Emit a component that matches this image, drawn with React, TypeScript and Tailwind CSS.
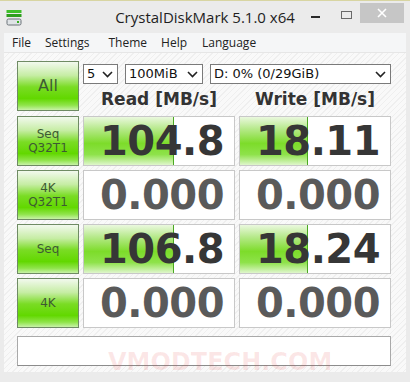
import React from "react";

type Row = {
  label: string[];
  read: string;
  readFill: number;
  write: string;
  writeFill: number;
};

const rows: Row[] = [
  { label: ["Seq", "Q32T1"], read: "104.8", readFill: 90, write: "18.11", writeFill: 68 },
  { label: ["4K", "Q32T1"], read: "0.000", readFill: 0, write: "0.000", writeFill: 0 },
  { label: ["Seq"], read: "106.8", readFill: 90, write: "18.24", writeFill: 68 },
  { label: ["4K"], read: "0.000", readFill: 0, write: "0.000", writeFill: 0 },
];

const Chevron = () => (
  <svg width="11" height="7" viewBox="0 0 11 7" className="shrink-0">
    <path d="M1 1 L5.5 5.5 L10 1" fill="none" stroke="#222" strokeWidth="1.6" />
  </svg>
);

const Select = ({ text, width }: { text: string; width: string }) => (
  <div
    className={`${width} h-[20px] bg-white border border-[#7a7a7a] flex items-center justify-between pl-[3px] pr-[4px] text-[13px] text-[#111] font-['DejaVu_Sans',sans-serif]`}
  >
    <span>{text}</span>
    <Chevron />
  </div>
);

const TestButton = ({ label }: { label: string[] }) => (
  <div className="w-[62px] h-[50px] shrink-0 border border-[#6f8b64] bg-[linear-gradient(to_bottom,#f2f9ee_0%,#c6eda4_28%,#7adc24_52%,#62d800_76%,#8fe44a_90%,#c8f2a8_100%)] flex flex-col items-center justify-center text-[12px] leading-[14px] text-[#3d5a33] font-['DejaVu_Sans',sans-serif]">
    {label.map((l) => (
      <div key={l}>{l}</div>
    ))}
  </div>
);

const Result = ({ value, fill }: { value: string; fill: number }) => (
  <div className="relative w-[152px] h-[50px] bg-white border border-[#c8c8c8] flex items-center justify-end pr-[10px] overflow-hidden">
    {fill > 0 && (
      <div
        className="absolute left-0 top-0 bottom-0 border-r border-[#4aa822] bg-[linear-gradient(to_bottom,#eaf8de_0%,#b6e98a_25%,#7ddc2a_55%,#8ee24a_78%,#dff6cc_100%)]"
        style={{ width: fill }}
      />
    )}
    <span
      className={`relative text-[40px] font-bold tracking-[-0.5px] leading-none font-['DejaVu_Sans',sans-serif] ${
        value === "0.000" ? "text-[#5a5a5a]" : "text-[#363636]"
      }`}
    >
      {value}
    </span>
  </div>
);

export default function App() {
  return (
    <div className="w-[410px] h-[382px] bg-[#ebebeb] border-t border-[#d8d5a2] flex flex-col overflow-hidden font-['Open_Sans',sans-serif]">
      {/* title bar */}
      <div className="h-[32px] grid grid-cols-[1fr_auto_1fr] shrink-0">
        <div className="pl-[6px] pt-[9px]">
          <svg width="16" height="16" viewBox="0 0 16 16">
            <rect x="0.5" y="0" width="15" height="3" fill="#3fbf2a" />
            <rect x="0.5" y="4" width="15" height="3" fill="#2e9e1e" />
            <rect x="1" y="9" width="14" height="6" rx="1.5" fill="#dfe3e6" stroke="#6b7378" />
            <rect x="11" y="11" width="2" height="2" fill="#36b020" />
          </svg>
        </div>
        <div className="pt-[6px] text-[15px] text-[#1e1e1e] leading-[20px]">CrystalDiskMark 5.1.0 x64</div>
        <div className="flex items-start justify-end pr-[6px]">
          <div className="w-[9px] h-[2px] bg-[#2a2a2a] mt-[15px]" />
          <div className="w-[11px] h-[8px] border border-[#6a6a6a] mt-[10px] ml-[21px]" />
          <div className="w-[44px] h-[20px] mt-[2px] ml-[8px] bg-[#c6c6c6] flex items-center justify-center">
            <svg width="10" height="10" viewBox="0 0 10 10">
              <path d="M1 1 L9 9 M9 1 L1 9" stroke="#fff" strokeWidth="1.6" />
            </svg>
          </div>
        </div>
      </div>

      {/* client area */}
      <div className="mx-[4px] flex flex-col h-[339px]">
        <div className="h-[20px] bg-[#f5f6f7] border-b border-[#e6e6e6] flex items-center pl-[8px] gap-[14px] text-[12px] text-[#222]">
          <span>File</span>
          <span>Settings</span>
          <span className="ml-[5px]">Theme</span>
          <span>Help</span>
          <span className="ml-[1px]">Language</span>
        </div>

        <div className="relative flex-1 bg-[repeating-linear-gradient(135deg,#f9f9f9_0px,#f9f9f9_3px,#efefef_3px,#efefef_4px)] pl-[13px] pt-[8px] flex flex-col gap-[4px]">
          {/* top row */}
          <div className="flex gap-[4px]">
            <div className="w-[62px] h-[50px] shrink-0 border border-[#6f8b64] bg-[linear-gradient(to_bottom,#f2f9ee_0%,#c6eda4_28%,#7adc24_52%,#62d800_76%,#8fe44a_90%,#c8f2a8_100%)] flex items-center justify-center text-[16px] text-[#3d5a33] font-['DejaVu_Sans',sans-serif]">
              All
            </div>
            <div className="flex flex-col pt-[3px]">
              <div className="flex gap-[7px]">
                <Select text="5" width="w-[35px]" />
                <Select text="100MiB" width="w-[78px]" />
                <Select text="D: 0% (0/29GiB)" width="w-[181px]" />
              </div>
              <div className="mt-[4px] h-[24px] flex gap-[4px] items-center text-[17px] font-bold text-[#333] font-['DejaVu_Sans',sans-serif]">
                <div className="w-[152px] text-center">Read [MB/s]</div>
                <div className="w-[152px] text-center">Write [MB/s]</div>
              </div>
            </div>
          </div>

          {rows.map((r, i) => (
            <div key={i} className="flex gap-[4px]">
              <TestButton label={r.label} />
              <Result value={r.read} fill={r.readFill} />
              <Result value={r.write} fill={r.writeFill} />
            </div>
          ))}

          <div className="mt-[4px] w-[374px] h-[30px] bg-white border border-[#a9a9a9] border-b-[#8c8c8c]" />

          <div className="absolute left-[104px] top-[291px] text-[24px] font-bold text-[rgba(225,60,60,0.12)] font-['DejaVu_Sans',sans-serif] pointer-events-none">
            VMODTECH.COM
          </div>
        </div>
      </div>
    </div>
  );
}
